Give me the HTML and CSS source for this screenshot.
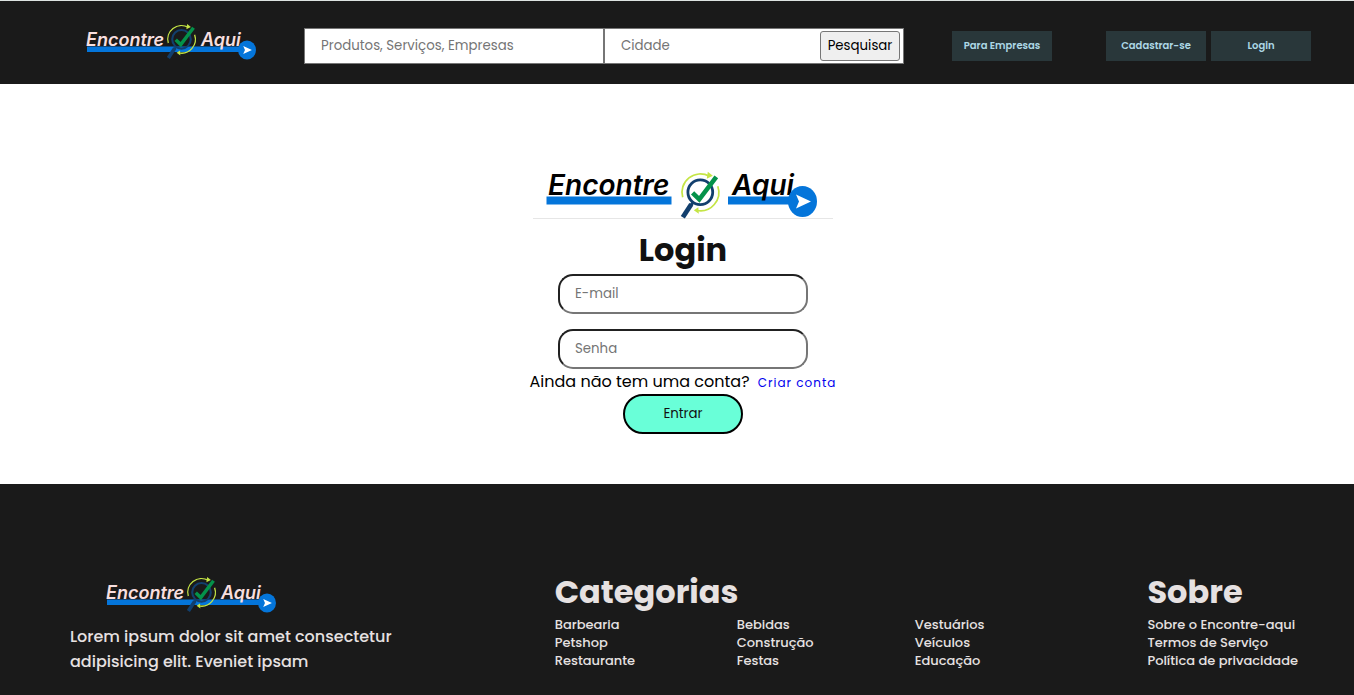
FILE: index.html
```html
<!DOCTYPE html>
<html lang="pt-BR">
<head>
<meta charset="utf-8">
<meta name="viewport" content="width=device-width, initial-scale=1">
<title>Encontre Aqui - Login</title>
<link rel="stylesheet" href="styles.css">
</head>
<body>
<svg class="sprite" aria-hidden="true">
  <defs>
    <g id="lupa">
      <path d="M-17.6 5A18.3 18.3 0 0 1 9-16" fill="none" stroke="#c5e545" stroke-width="1.7"/>
      <path d="M7.500-20.500L12.500-16.500L6.500-13.500Z" fill="#c5e545"/>
      <path d="M17.500-6A18.500 18.500 0 0 1-3.500 18.200" fill="none" stroke="#c5e545" stroke-width="1.700"/>
      <path d="M-2 15L-6.500 18L-1.500 21.500Z" fill="#c5e545"/>
      <circle r="12.400" fill="none" stroke="#123f6d" stroke-width="2.800"/>
      <path d="M-7.500 10.500L-9.500 13" stroke="#123f6d" stroke-width="3"/>
      <path d="M-9 12L-17.500 25" stroke="#123f6d" stroke-width="4.800"/>
      <path d="M-7.700 .500L-1 7L16-15.500" fill="none" stroke="#04924a" stroke-width="4.600"/>
    </g>
    <path id="seta" d="M-6.500-7L8.500 0L-6.500 7L-3.500 0Z" fill="#fff"/>
    <g id="marca">
      <path d="M1 22.500H162V28H1Z" fill="#0475da"/>
      <text x="0" y="22" class="logo-text logo-text-small">Encontre</text>
      <text x="115" y="22" class="logo-text logo-text-small">Aqui</text>
      <use href="#lupa" transform="translate(95.500 15.300) scale(.75)"/>
      <ellipse cx="161" cy="26" rx="9" ry="9.500" fill="#0475da"/>
      <use href="#seta" transform="translate(161 26) scale(.58)"/>
    </g>
  </defs>
</svg>

<header class="topbar">
  <a class="brand" href="#" aria-label="Encontre Aqui"><svg class="brand-logo" viewBox="0 0 170 36"><use href="#marca"/></svg></a>
  <form class="search">
    <input class="search-field" type="text" placeholder="Produtos, Serviços, Empresas" aria-label="Produtos, Serviços, Empresas">
    <div class="search-city">
      <input class="search-input" type="text" placeholder="Cidade" aria-label="Cidade">
      <button class="search-button" type="submit">Pesquisar</button>
    </div>
  </form>
  <a class="nav-link" href="#">Para Empresas</a>
  <nav class="account">
    <a class="nav-link" href="#">Cadastrar-se</a>
    <a class="nav-link" href="#">Login</a>
  </nav>
</header>

<main class="content">
  <form class="login">
    <svg class="login-logo" viewBox="0 0 300 54" role="img" aria-label="Encontre Aqui">
      <path d="M0 53.500H300" stroke="#e6e6e6"/>
      <path d="M13.500 31.500H138.500V39.500H13.500ZM195 31.500H268V39.500H195Z" fill="#0475da"/>
      <text x="15" y="30" class="logo-text logo-text-large">Encontre</text>
      <text x="199" y="30" class="logo-text logo-text-large">Aqui</text>
      <use href="#lupa" transform="translate(167.300 27.300)"/>
      <ellipse cx="269.500" cy="36.500" rx="14.500" ry="15.500" fill="#0475da"/>
      <use href="#seta" transform="translate(269.500 36.500)"/>
    </svg>
    <h1 class="login-title">Login</h1>
    <div class="fields">
      <input class="field" type="email" placeholder="E-mail" aria-label="E-mail">
      <input class="field" type="password" placeholder="Senha" aria-label="Senha">
    </div>
    <p class="signup">Ainda não tem uma conta? <a class="signup-link" href="#">Criar conta</a></p>
    <button class="submit" type="submit">Entrar</button>
  </form>
</main>

<footer class="footer">
  <section>
    <svg class="footer-logo" viewBox="0 0 170 36" role="img" aria-label="Encontre Aqui"><use href="#marca"/></svg>
    <p class="about-text">Lorem ipsum dolor sit amet consectetur adipisicing elit. Eveniet ipsam</p>
  </section>
  <section>
    <h2 class="footer-title">Categorias</h2>
    <div class="categories">
      <ul class="links">
        <li><a href="#">Barbearia</a></li>
        <li><a href="#">Petshop</a></li>
        <li><a href="#">Restaurante</a></li>
      </ul>
      <ul class="links">
        <li><a href="#">Bebidas</a></li>
        <li><a href="#">Construção</a></li>
        <li><a href="#">Festas</a></li>
      </ul>
      <ul class="links">
        <li><a href="#">Vestuários</a></li>
        <li><a href="#">Veículos</a></li>
        <li><a href="#">Educação</a></li>
      </ul>
    </div>
  </section>
  <section>
    <h2 class="footer-title">Sobre</h2>
    <ul class="links">
      <li><a href="#">Sobre o Encontre-aqui</a></li>
      <li><a href="#">Termos de Serviço</a></li>
      <li><a href="#">Política de privacidade</a></li>
    </ul>
  </section>
</footer>
</body>
</html>
```
FILE: styles.css
```css
* {
  box-sizing: border-box;
  margin: 0;
  padding: 0;
}

body {
  display: flex;
  flex-direction: column;
  min-height: 100vh;
  background: #fff;
  color: #111;
  font-family: Poppins, Inter, "Open Sans", sans-serif;
}

input,
button {
  font-family: inherit;
}

input::placeholder {
  color: #757575;
}

a {
  text-decoration: none;
}

.sprite {
  position: absolute;
  width: 0;
  height: 0;
}

.logo-text {
  font-family: Inter, sans-serif;
  font-style: italic;
  font-weight: 600;
}

.logo-text-small {
  font-size: 18px;
  fill: #f8dfdf;
}

.logo-text-large {
  font-size: 28px;
  fill: #000;
}

.topbar {
  display: flex;
  align-items: center;
  gap: 48px;
  padding: 21px 43px 20px 86px;
  border-top: 1px solid #dde3e1;
  background: #1a1a1a;
}

.brand {
  flex: none;
  height: 42px;
}

.brand-logo,
.footer-logo {
  display: block;
  width: 170px;
  height: 36px;
  overflow: visible;
}

.brand-logo {
  margin-top: 2px;
}

.search {
  display: grid;
  flex: 0 1 600px;
  grid-template-columns: 1fr 1fr;
  min-width: 0;
  height: 36px;
  margin-top: 6px;
}

.search-field,
.search-city {
  min-width: 0;
  border: 1px solid #767676;
  background: #fff;
}

.search-field {
  padding: 0 16px;
}

.search-city {
  display: flex;
  align-items: center;
  padding: 0 3px 0 16px;
}

.search-input {
  flex: 1;
  min-width: 0;
  border: 0;
  outline: 0;
}

.search-button {
  width: 80px;
  height: 30px;
  border: 1px solid #767676;
  border-radius: 3px;
  background: #efefef;
  color: #000;
}

.nav-link {
  width: 100px;
  margin-top: 6px;
  background: #29373a;
  color: #add8e6;
  font-size: 10px;
  font-weight: 600;
  line-height: 30px;
  text-align: center;
}

.account {
  display: flex;
  gap: 5px;
  margin-left: auto;
}

.content {
  padding: 81px 0 50px 12px;
}

.login {
  display: flex;
  flex-direction: column;
  align-items: center;
}

.login-logo {
  width: 300px;
  height: 54px;
}

.login-title {
  margin-top: 7px;
  font-size: 32px;
  font-weight: 700;
  line-height: 48px;
}

.fields {
  display: grid;
  gap: 15px;
}

.field {
  width: 250px;
  height: 40px;
  padding: 0 15px;
  border: 2px inset #767676;
  border-radius: 15px;
}

.signup {
  color: #000;
  font-size: 16px;
  line-height: 25px;
}

.signup-link {
  margin-left: 4px;
  color: #00e;
  font-size: 12px;
  letter-spacing: 1px;
  line-height: 18px;
}

.submit {
  width: 120px;
  height: 40px;
  border: 2px solid #000;
  border-radius: 20px;
  background: #69ffd8;
  color: #111;
}

.footer {
  display: grid;
  flex: 1;
  grid-template-columns: 485fr 593fr 150fr;
  align-content: start;
  padding: 84px 56px 20px 70px;
  background: #1a1a1a;
  color: #e6e1e1;
}

.footer-logo {
  margin: 9px 0 11px 36px;
}

.about-text {
  max-width: 340px;
  font-size: 16px;
  font-weight: 500;
  line-height: 25px;
}

.footer-title {
  font-size: 32px;
  font-weight: 700;
  line-height: 48px;
}

.categories {
  display: grid;
  grid-template-columns: 182px 178px auto;
}

.links {
  list-style: none;
  font-size: 13px;
  font-weight: 500;
  line-height: 18px;
  white-space: nowrap;
}

.links a {
  color: inherit;
}
```
